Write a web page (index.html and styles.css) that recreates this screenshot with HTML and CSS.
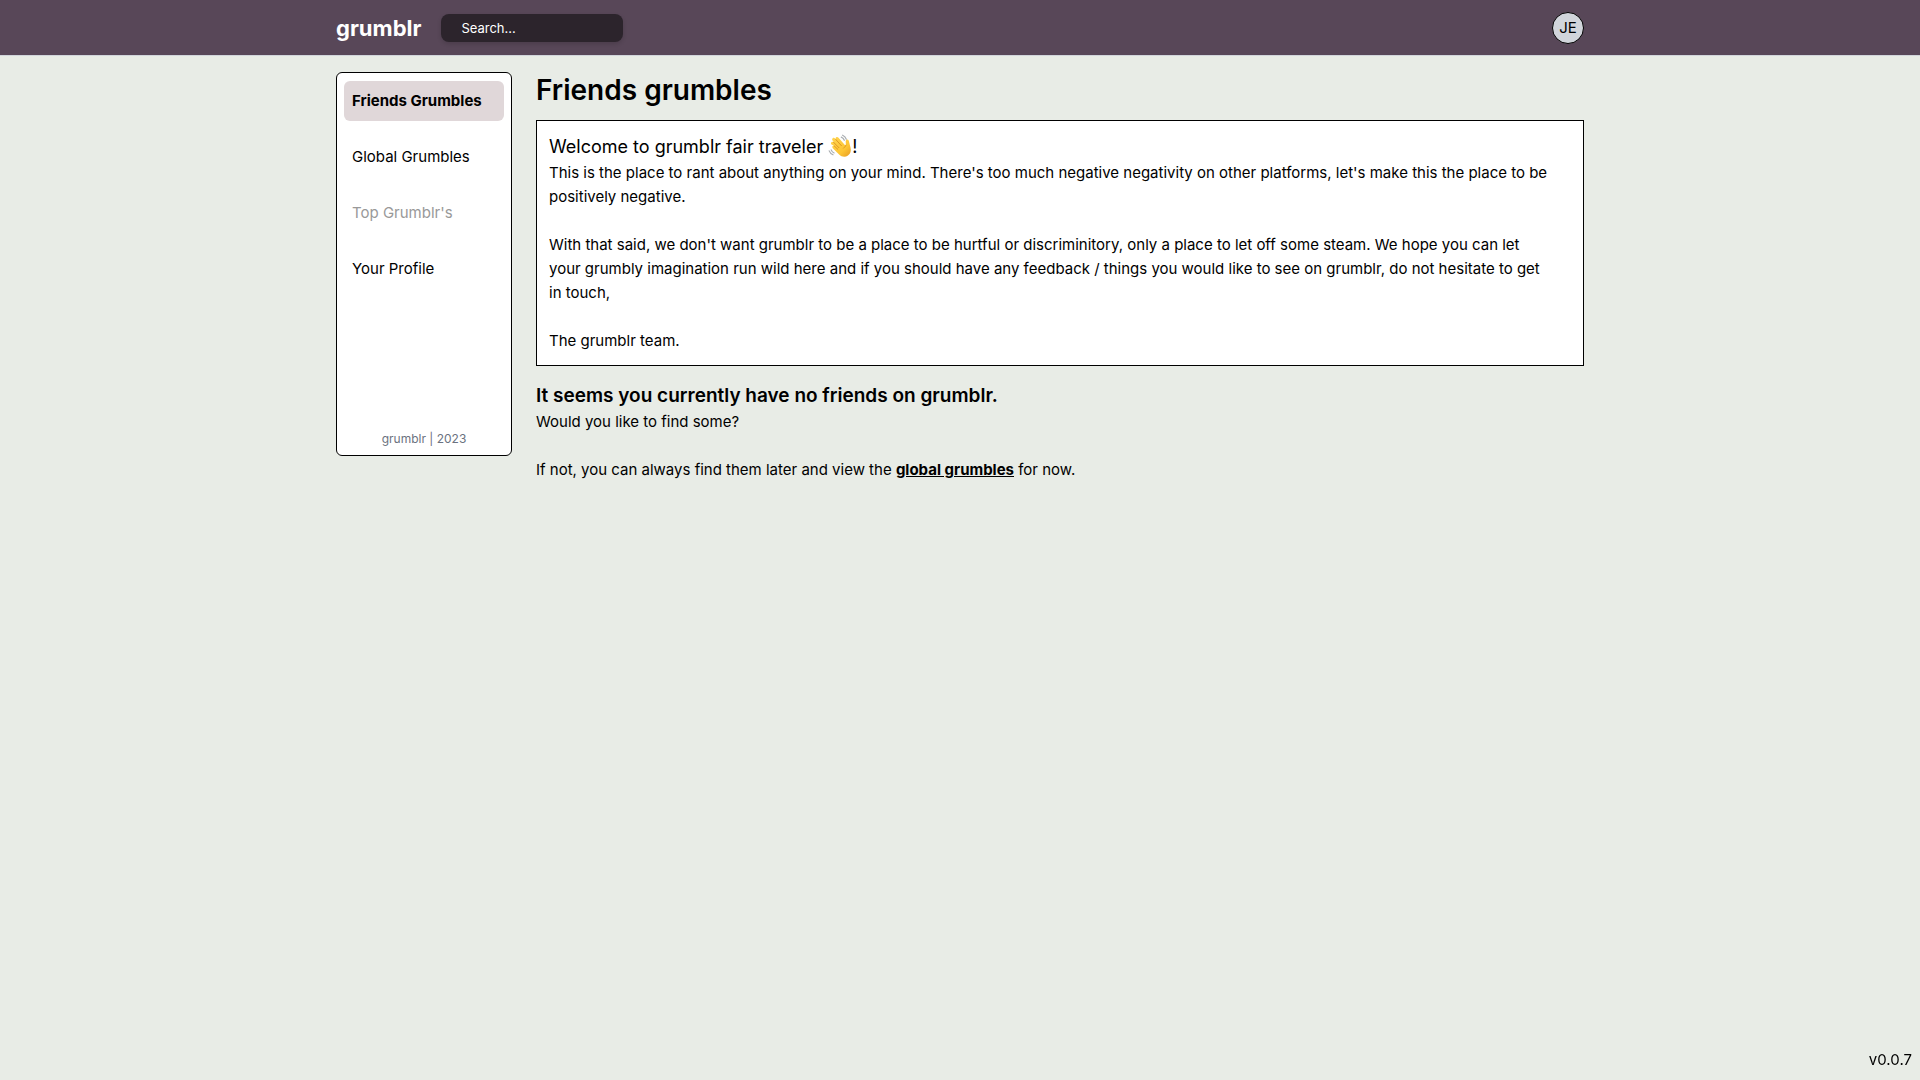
FILE: index.html
```html
<!DOCTYPE html>
<html lang="en">
<head>
<meta charset="utf-8">
<meta name="viewport" content="width=device-width, initial-scale=1">
<title>grumblr</title>
<link rel="stylesheet" href="styles.css">
</head>
<body>
<header class="topbar">
  <div class="container topbar-inner">
    <a class="logo" href="#">grumblr</a>
    <input class="search" type="search" placeholder="Search..." aria-label="Search">
    <button class="avatar" type="button" aria-label="Account menu">JE</button>
  </div>
</header>
<div class="container layout">
  <aside class="sidebar">
    <nav class="nav">
      <a class="nav-item active" href="#" aria-current="page">Friends Grumbles</a>
      <a class="nav-item" href="#">Global Grumbles</a>
      <a class="nav-item disabled" href="#" aria-disabled="true">Top Grumblr's</a>
      <a class="nav-item" href="#">Your Profile</a>
    </nav>
    <p class="copyright">grumblr | 2023</p>
  </aside>
  <main class="main">
    <h1 class="page-title">Friends grumbles</h1>
    <section class="welcome">
      <h2 class="welcome-title">Welcome to grumblr fair traveler <svg class="wave" viewBox="0 0 24 24" aria-hidden="true">
        <defs>
          <linearGradient id="skin" x1="0" y1="0" x2="1" y2="1">
            <stop offset="0" stop-color="#ffd552"/>
            <stop offset=".65" stop-color="#fdc534"/>
            <stop offset="1" stop-color="#e69a22"/>
          </linearGradient>
        </defs>
        <path fill="url(#skin)" d="M3.4 8.2c.7-.7 1.600-.6 2.300.1L4.600 6.600C3.900 5.700 4 4.800 4.700 4.200c.8-.6 1.700-.4 2.400.4l.8.9c-.5-.8-.4-1.700.3-2.200.8-.6 1.700-.3 2.300.4l6.600 7.500c.3.300.8.100.8-.4l-.2-2.900c-.1-1.300.5-2.200 1.500-2.300 1-.1 1.500.7 1.800 1.900l1.500 6.100c.9 3.600-.1 6.300-2.500 8-2.900 2-6.300 1.500-8.900-1L5 14.400c-.8-.8-.9-1.700-.3-2.300.5-.5 1.200-.5 1.800-.1L3.500 10.400c-.7-.7-.7-1.600-.1-2.200z"/>
        <path fill="none" stroke="#d58a1c" stroke-width=".8" stroke-linecap="round" d="M5.600 8.300l5.300 5.400M7.800 5.500l5.600 6.200M6.300 12l3.500 3.300M17.900 11.100c-.2 1.400-1.300 1.900-2.300 3"/>
        <path fill="none" stroke="#a9adb1" stroke-width="1.200" stroke-linecap="round" d="M13.300 3.100c1.500.6 2.500 1.700 3 3.200M14.600 1.200c1.900.8 3.100 2.200 3.700 4.100M3.200 15.900c.5 1.400 1.400 2.500 2.900 3.100M1.200 16.900c.7 1.900 2 3.100 3.800 3.900"/>
      </svg>!</h2>
      <p>This is the place to rant about anything on your mind. There's too much negative negativity on other platforms, let's make this the place to be positively negative.</p>
      <p>With that said, we don't want grumblr to be a place to be hurtful or discriminitory, only a place to let off some steam. We hope you can let your grumbly imagination run wild here and if you should have any feedback / things you would like to see on grumblr, do not hesitate to get in&nbsp;touch,</p>
      <p>The grumblr team.</p>
    </section>
    <section class="empty">
      <h2 class="empty-title">It seems you currently have no friends on grumblr.</h2>
      <p>Would you like to find some?</p>
      <p>If not, you can always find them later and view the <a class="link" href="#">global grumbles</a> for now.</p>
    </section>
  </main>
</div>
<div class="version">v0.0.7</div>
</body>
</html>
```
FILE: styles.css
```css
*, *::before, *::after { box-sizing: border-box; }
body {
  margin: 0;
  min-height: 100vh;
  background: #e8ece6;
  color: #000;
  font-family: Inter, "Liberation Sans", sans-serif;
  font-size: 15px;
  line-height: 24px;
}
h1, h2, p { margin: 0; }
a { color: inherit; text-decoration: none; }

.container {
  max-width: 1280px;
  margin: 0 auto;
  padding: 0 16px;
}

.topbar {
  background: #584758;
  border-bottom: 1px solid #d1d5db;
}
.topbar-inner {
  display: flex;
  align-items: center;
  padding-top: 12px;
  padding-bottom: 11px;
}
.logo {
  color: #fff;
  font-size: 22px;
  font-weight: 700;
  line-height: 32px;
  margin-right: 20px;
}
.search {
  width: 182px;
  height: 28px;
  padding: 0 20px;
  border: 0;
  border-radius: 8px;
  background: #2c242c;
  color: #fff;
  font: inherit;
  font-size: 13px;
  box-shadow: 0 2px 4px rgba(0, 0, 0, .15);
}
.search::placeholder { color: #fff; opacity: 1; }
.avatar {
  width: 32px;
  height: 32px;
  margin-left: auto;
  padding: 0;
  border: 1px solid #000;
  border-radius: 50%;
  background: #d1d5db;
  color: #000;
  font: inherit;
}

.layout {
  display: flex;
  align-items: flex-start;
  gap: 24px;
  padding-top: 16px;
}
.sidebar {
  display: flex;
  flex: none;
  flex-direction: column;
  justify-content: space-between;
  width: 176px;
  min-height: 384px;
  padding: 8px 7px 4px;
  border: 1px solid #000;
  border-radius: 6px;
  background: #fff;
}
.nav {
  display: flex;
  flex-direction: column;
  gap: 16px;
}
.nav-item {
  padding: 8px;
  border-radius: 6px;
  white-space: nowrap;
}
.nav-item.active { background: #e0d7d9; font-weight: 700; }
.nav-item.disabled { color: #999; }
.copyright {
  color: #6b7280;
  font-size: 12px;
  text-align: center;
}

.main { flex: 1; min-width: 0; }
.page-title {
  margin-bottom: 12px;
  font-size: 28px;
  font-weight: 600;
  line-height: 36px;
}
.welcome {
  padding: 12px 32px 12px 12px;
  border: 1px solid #000;
  background: #fff;
}
.welcome-title {
  font-size: 18px;
  font-weight: 400;
  line-height: 28px;
}
.wave {
  width: 24px;
  height: 24px;
  vertical-align: -5px;
}
p + p { margin-top: 24px; }
.empty { margin-top: 16px; }
.empty-title {
  font-size: 19px;
  font-weight: 600;
  line-height: 28px;
}
.link { font-weight: 700; text-decoration: underline; }

.version {
  position: fixed;
  right: 8px;
  bottom: 8px;
}
```
